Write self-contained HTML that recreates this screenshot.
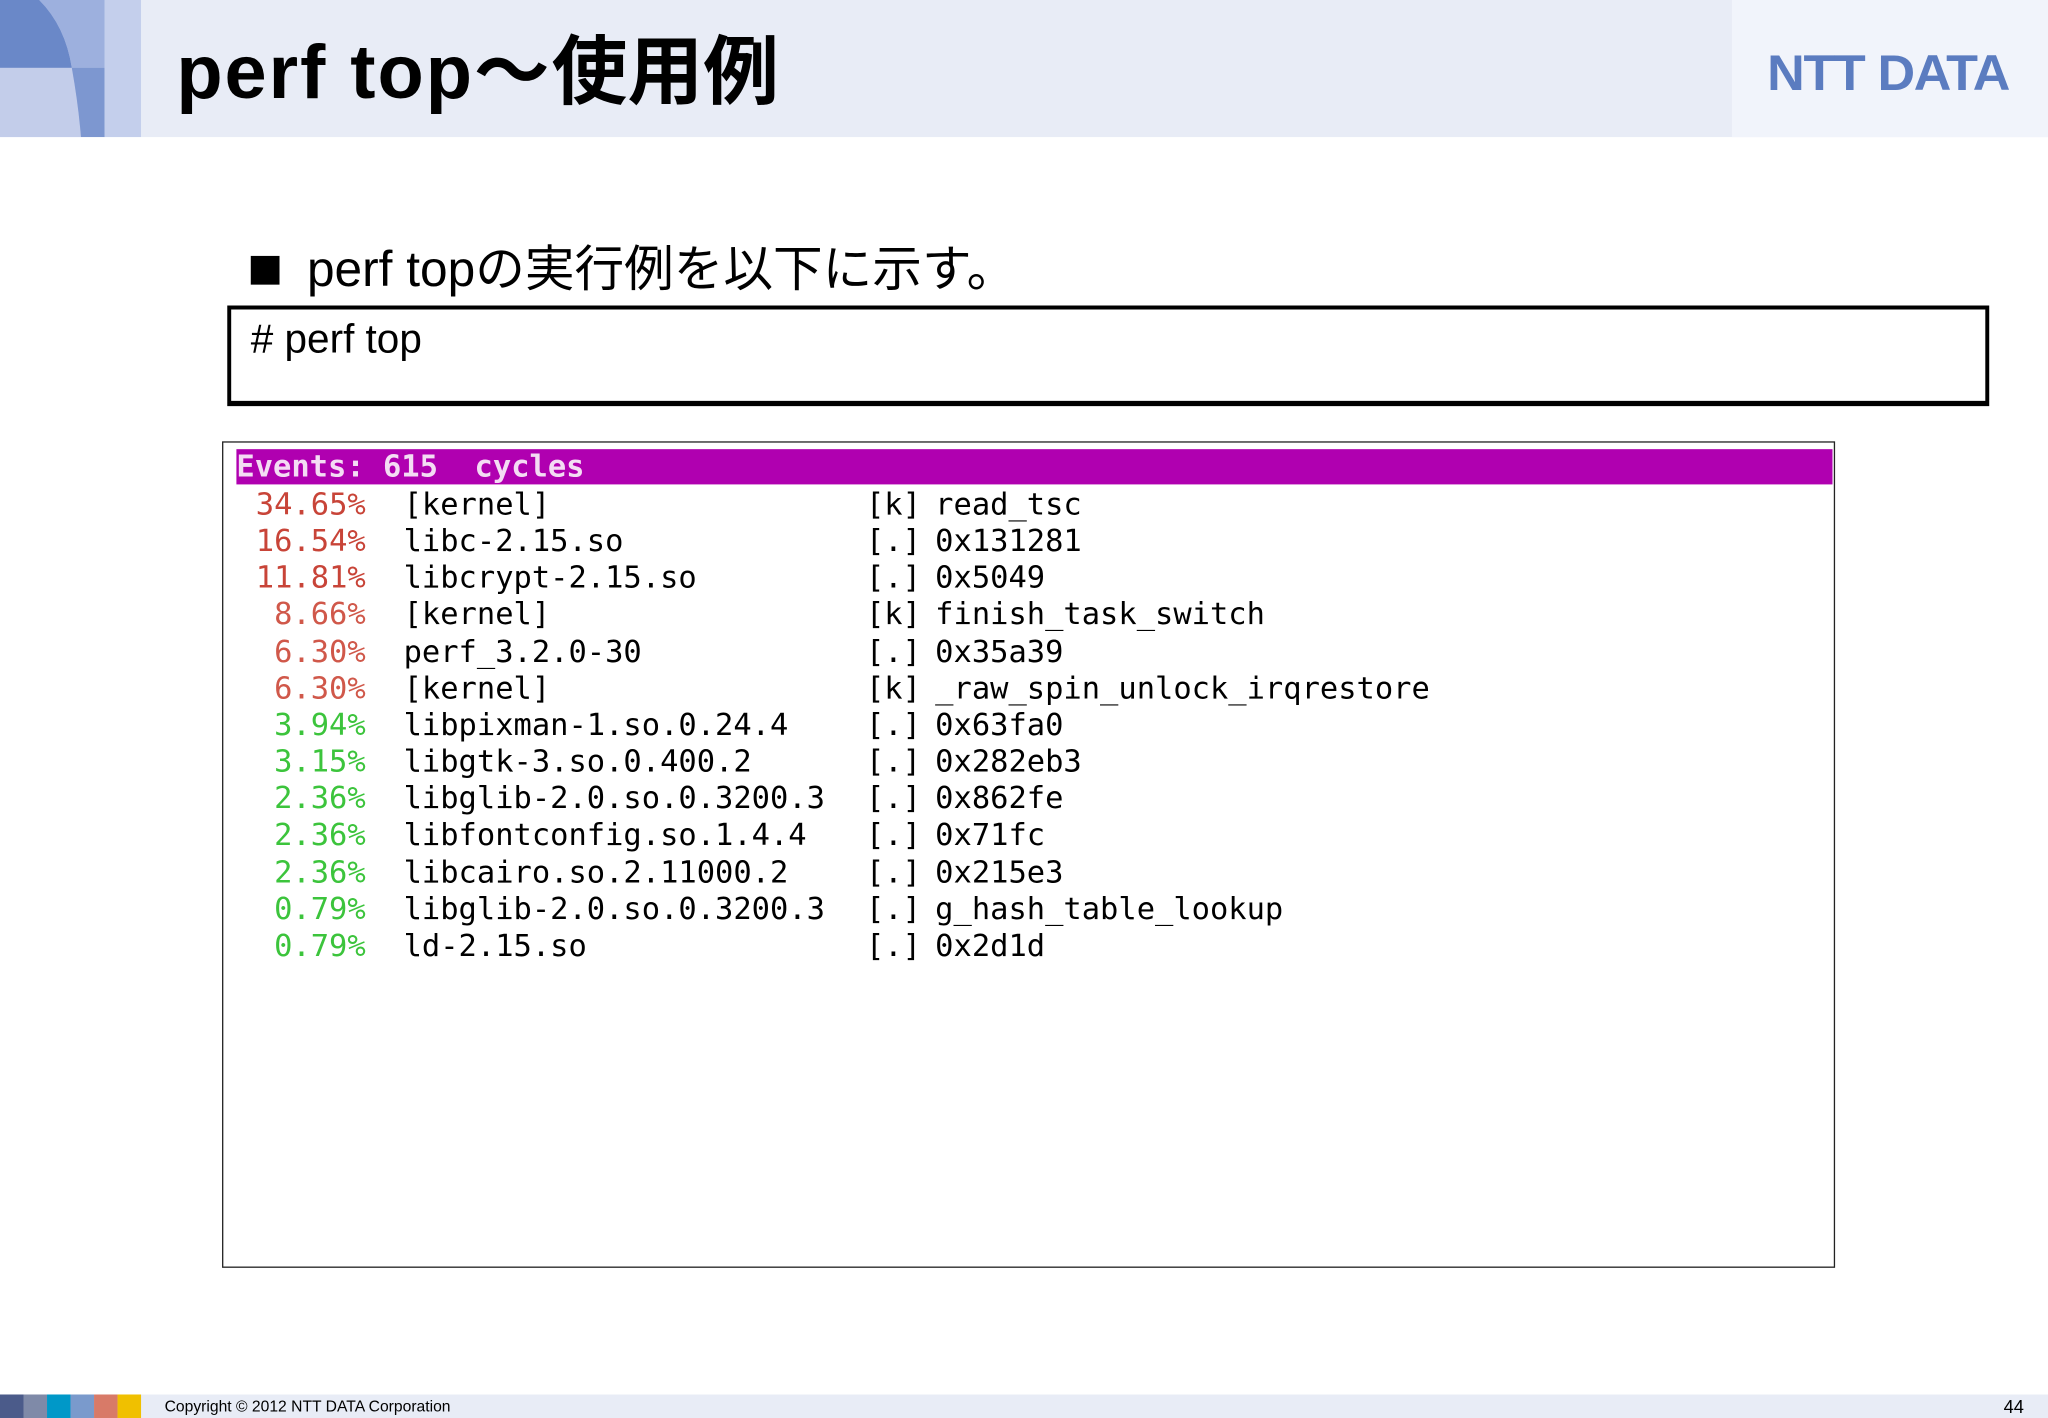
<!DOCTYPE html>
<html><head><meta charset="utf-8"><style>
html,body{margin:0;padding:0;width:2048px;height:1418px;overflow:hidden;background:#fff}
#w{position:absolute;left:0;top:0;width:1568px;height:1086px;transform:scale(1.30612,1.3057);transform-origin:0 0;font-family:"Liberation Sans","Noto Sans CJK JP",sans-serif}
.a{position:absolute}
.mono{font-family:"DejaVu Sans Mono","Liberation Mono",monospace;font-size:23.3px;line-height:28.15px;white-space:pre}
.r{color:#c84438}.r2{color:#d0584a}.g{color:#3cc43c}
</style></head><body><div id="w">
<div class="a" style="left:0;top:0;width:1568px;height:105px;background:#e8ecf6"></div>
<div class="a" style="left:1326px;top:0;width:242px;height:105px;background:#f1f4fb"></div>
<svg class="a" style="left:0;top:0" width="108" height="105">
<rect width="108" height="105" fill="#aebde3"/>
<rect x="80" y="0" width="28" height="105" fill="#c4cfec"/>
<path d="M0 0 H30 Q50 20 55 52 H0Z" fill="#6a88c8"/>
<path d="M30 0 H80 V52 H55 Q50 20 30 0Z" fill="#9db0de"/>
<path d="M0 52 H55 Q60 80 62 105 H0Z" fill="#c3cdea"/>
<path d="M55 52 H80 V105 H62 Q60 80 55 52Z" fill="#7d97d0"/>
</svg>
<div class="a" style="left:135px;top:20px;font-size:58px;font-weight:bold;color:#000;line-height:72px;white-space:nowrap"><span style="letter-spacing:1.5px">perf top～</span>使用例</div>
<div class="a" style="left:1353px;top:34px;font-size:38px;font-weight:bold;color:#5b7cc0;letter-spacing:-1px;line-height:46px;transform:scaleX(1.05);transform-origin:0 0;white-space:nowrap">NTT DATA</div>
<div class="a" style="left:192px;top:196px;width:22px;height:22px;background:#000"></div>
<div class="a" style="left:235px;top:184px;font-size:38px;line-height:46px;white-space:nowrap">perf topの実行例を以下に示す。</div>
<div class="a" style="left:174px;top:234px;width:1343px;height:70px;border:3px solid #000;border-bottom-width:4px"></div>
<div class="a" style="left:192px;top:242px;font-size:31px;line-height:36px;white-space:nowrap"># perf top</div>
<div class="a" style="left:170px;top:338px;width:1233px;height:631px;border:1px solid #222"></div>
<div class="a" style="left:181px;top:344px;width:1222px;height:27px;background:#b000b0"></div>
<div class="a mono" style="left:181px;top:344px;color:#f4dcf4;font-weight:bold">Events: 615  cycles</div>
<div class="a mono" style="left:160px;width:120px;text-align:right;top:373px"><span class="r">34.65%</span>
<span class="r">16.54%</span>
<span class="r">11.81%</span>
<span class="r2">8.66%</span>
<span class="r2">6.30%</span>
<span class="r2">6.30%</span>
<span class="g">3.94%</span>
<span class="g">3.15%</span>
<span class="g">2.36%</span>
<span class="g">2.36%</span>
<span class="g">2.36%</span>
<span class="g">0.79%</span>
<span class="g">0.79%</span></div>
<div class="a mono" style="left:309px;top:373px">[kernel]
libc-2.15.so
libcrypt-2.15.so
[kernel]
perf_3.2.0-30
[kernel]
libpixman-1.so.0.24.4
libgtk-3.so.0.400.2
libglib-2.0.so.0.3200.3
libfontconfig.so.1.4.4
libcairo.so.2.11000.2
libglib-2.0.so.0.3200.3
ld-2.15.so</div>
<div class="a mono" style="left:663px;top:373px">[k]
[.]
[.]
[k]
[.]
[k]
[.]
[.]
[.]
[.]
[.]
[.]
[.]</div>
<div class="a mono" style="left:716px;top:373px">read_tsc
0x131281
0x5049
finish_task_switch
0x35a39
_raw_spin_unlock_irqrestore
0x63fa0
0x282eb3
0x862fe
0x71fc
0x215e3
g_hash_table_lookup
0x2d1d</div>
<div class="a" style="left:0;top:1068px;width:1568px;height:18px;background:#e8ecf6"></div>
<div class="a" style="left:0;top:1068px;width:18px;height:18px;background:#4b5b8a"></div>
<div class="a" style="left:18px;top:1068px;width:18px;height:18px;background:#7f8aa8"></div>
<div class="a" style="left:36px;top:1068px;width:18px;height:18px;background:#0098c8"></div>
<div class="a" style="left:54px;top:1068px;width:18px;height:18px;background:#7a9acc"></div>
<div class="a" style="left:72px;top:1068px;width:18px;height:18px;background:#d87a68"></div>
<div class="a" style="left:90px;top:1068px;width:18px;height:18px;background:#f0c000"></div>
<div class="a" style="left:126px;top:1069px;font-size:12px;line-height:16px;white-space:nowrap">Copyright © 2012 NTT DATA Corporation</div>
<div class="a" style="left:1534px;top:1068px;font-size:14px;line-height:18px">44</div>
</div></body></html>
